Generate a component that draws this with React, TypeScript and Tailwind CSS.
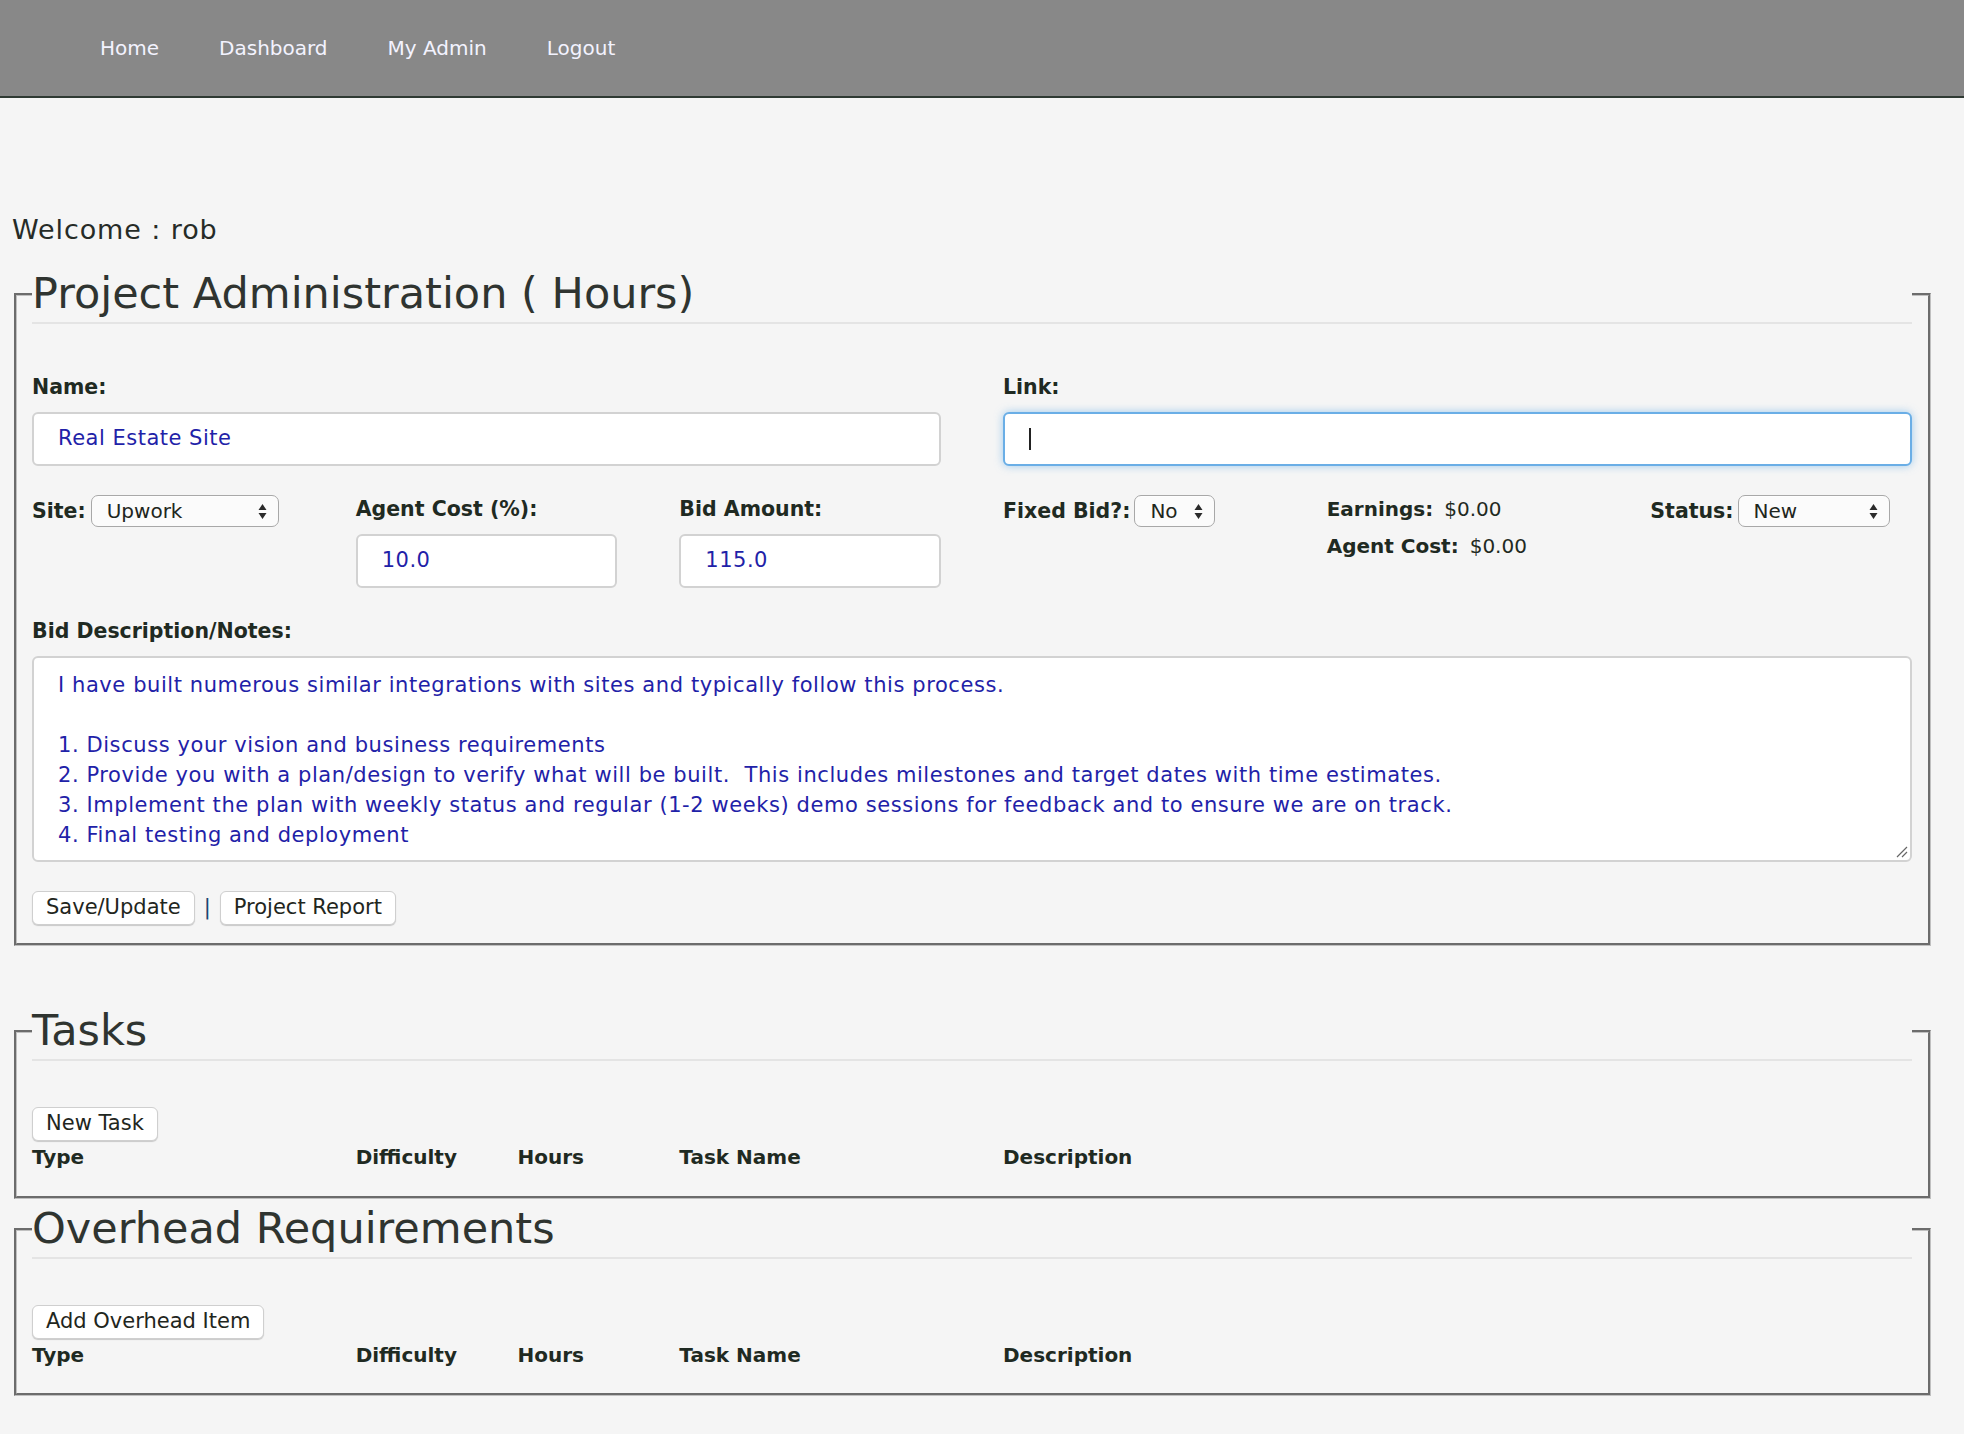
import React from "react";

const FONT = "[font-family:'DejaVu_Sans','Liberation_Sans',sans-serif]";

function Arrows() {
  return (
    <svg width="9" height="17" viewBox="0 0 9 17" className="shrink-0">
      <path d="M4.5 1 L8.5 7 H0.5 Z M4.5 16 L8.5 10 H0.5 Z" fill="#2b2b2b" />
    </svg>
  );
}

function Select({ value, className }: { value: string; className: string }) {
  return (
    <div
      className={
        "flex h-[32px] items-center justify-between rounded-[7px] border-[1.5px] border-[#a8a8a8] bg-[#fbfbfb] pl-[15px] pr-[11px] text-[20px] text-[#1e2620] shadow-[inset_0_1px_0_rgba(255,255,255,0.8)] " +
        className
      }
    >
      <span>{value}</span>
      <Arrows />
    </div>
  );
}

function Label({ children }: { children: React.ReactNode }) {
  return <div className="text-[20.5px] font-bold leading-[28px] text-[#1f2a22]">{children}</div>;
}

function TextInput({ value }: { value: string }) {
  return (
    <div className="mt-[11px] flex h-[54px] items-center rounded-[6px] border-2 border-[#d2d2d2] bg-white pl-[24px] text-[21px] tracking-[0.5px] text-[#1f22a8]">
      {value}
    </div>
  );
}

function Button({ children }: { children: React.ReactNode }) {
  return (
    <div className="flex h-[34px] items-center rounded-[6px] border-[1.5px] border-[#cfcfcf] bg-white px-[13px] text-[21px] text-[#1f2620] shadow-[0_1px_1px_rgba(0,0,0,0.18)]">
      {children}
    </div>
  );
}

function Fieldset({
  title,
  className,
  children,
}: {
  title: string;
  className: string;
  children: React.ReactNode;
}) {
  return (
    <fieldset
      className={
        "mx-[2px] [border-width:3px] [border-style:groove] [border-color:#c0c0c0] pl-[15px] pr-[16px] " + className
      }
    >
      <legend className="block w-full border-b-2 border-[#e4e4e4] text-[43px] leading-[58px] text-[#2f3430]">
        {title}
      </legend>
      {children}
    </fieldset>
  );
}

function HeaderRow() {
  return (
    <div className="mt-[2px] grid grid-cols-12 gap-x-[62px] text-[20px] font-bold leading-[28px] text-[#1f2a22]">
      <div className="col-span-2">Type</div>
      <div className="col-span-1">Difficulty</div>
      <div className="col-span-1">Hours</div>
      <div className="col-span-2">Task Name</div>
      <div className="col-span-6">Description</div>
    </div>
  );
}

const notes = `I have built numerous similar integrations with sites and typically follow this process.

1. Discuss your vision and business requirements
2. Provide you with a plan/design to verify what will be built.  This includes milestones and target dates with time estimates.
3. Implement the plan with weekly status and regular (1-2 weeks) demo sessions for feedback and to ensure we are on track.
4. Final testing and deployment`;

export default function App() {
  return (
    <div className={"min-h-screen bg-[#f5f5f5] pb-[37px] text-[#2d322e] " + FONT}>
      <nav className="flex h-[98px] items-center gap-[60px] border-b-2 border-[#2f3a33] bg-[#888888] pl-[100px] text-[20px] text-[#f3f3ff]">
        <span>Home</span>
        <span>Dashboard</span>
        <span>My Admin</span>
        <span>Logout</span>
      </nav>

      <div className="pl-[12px] pr-[31px]">
        <div className="mt-[114px] text-[27px] leading-[36px] tracking-[0.9px] text-[#262b27]">Welcome : rob</div>

        <Fieldset title="Project Administration ( Hours)" className="mt-[16px] pb-[18px]">
          <div className="mt-[49px] grid grid-cols-2 gap-x-[62px]">
            <div>
              <Label>Name:</Label>
              <TextInput value="Real Estate Site" />
            </div>
            <div>
              <Label>Link:</Label>
              <div className="mt-[11px] flex h-[54px] items-center rounded-[6px] border-2 border-[#6aaee6] bg-white pl-[24px] shadow-[0_0_8px_rgba(102,175,233,0.6)]">
                <div className="h-[22px] w-[2px] bg-[#222]" />
              </div>
            </div>
          </div>

          <div className="mt-[29px] grid grid-cols-6 gap-x-[62px]">
            <div className="flex items-start gap-[5px]">
              <div className="mt-[2px]">
                <Label>Site:</Label>
              </div>
              <Select value="Upwork" className="w-[188px]" />
            </div>
            <div>
              <Label>Agent Cost (%):</Label>
              <TextInput value="10.0" />
            </div>
            <div>
              <Label>Bid Amount:</Label>
              <TextInput value="115.0" />
            </div>
            <div className="flex items-start gap-[4px]">
              <div className="mt-[2px]">
                <Label>Fixed Bid?:</Label>
              </div>
              <Select value="No" className="w-[81px]" />
            </div>
            <div className="flex flex-col gap-[9px] text-[20px] leading-[28px]">
              <div>
                <span className="font-bold text-[#1f2a22]">Earnings:</span>
                <span className="ml-[11px] text-[#1f2a22]">$0.00</span>
              </div>
              <div>
                <span className="font-bold text-[#1f2a22]">Agent Cost:</span>
                <span className="ml-[11px] text-[#1f2a22]">$0.00</span>
              </div>
            </div>
            <div className="flex items-start gap-[4px]">
              <div className="mt-[2px]">
                <Label>Status:</Label>
              </div>
              <Select value="New" className="w-[152px]" />
            </div>
          </div>

          <div className="mt-[29px]">
            <Label>Bid Description/Notes:</Label>
            <div className="relative mt-[11px] h-[206px] rounded-[6px] border-2 border-[#d2d2d2] bg-white pl-[24px] pr-[20px] pt-[12px] text-[21px] leading-[30px] tracking-[0.58px] whitespace-pre-wrap text-[#1f22a8]">
              {notes}
              <svg
                width="12"
                height="12"
                viewBox="0 0 12 12"
                className="absolute bottom-[2px] right-[2px]"
              >
                <path d="M1 11 L11 1 M6 11 L11 6" stroke="#666" strokeWidth="1.2" />
              </svg>
            </div>
          </div>

          <div className="mt-[29px] flex items-center gap-[9px]">
            <Button>Save/Update</Button>
            <span className="text-[21px] text-[#1d4470]">|</span>
            <Button>Project Report</Button>
          </div>
        </Fieldset>

        <Fieldset title="Tasks" className="mt-[55px] pb-[25px]">
          <div className="mt-[46px] flex">
            <Button>New Task</Button>
          </div>
          <HeaderRow />
        </Fieldset>

        <Fieldset title="Overhead Requirements" className="pb-[24px]">
          <div className="mt-[46px] flex">
            <Button>Add Overhead Item</Button>
          </div>
          <HeaderRow />
        </Fieldset>
      </div>
    </div>
  );
}
